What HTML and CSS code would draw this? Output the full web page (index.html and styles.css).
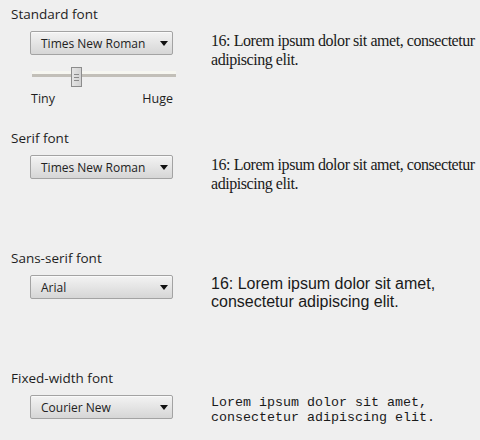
FILE: index.html
```html
<!DOCTYPE html>
<html>
<head>
<meta charset="utf-8">
<link rel="stylesheet" href="styles.css">
</head>
<body>
<div class="page">
  <section class="section section-first">
    <div class="label">Standard font</div>
    <div class="row">
      <div class="controls">
        <div class="select"><span>Times New Roman</span><span class="arrow"></span></div>
        <div class="slider"><div class="track"></div><div class="thumb"><i></i><i></i><i></i></div></div>
        <div class="scale"><span>Tiny</span><span>Huge</span></div>
      </div>
      <div class="preview serif">16: Lorem ipsum dolor sit amet, consectetur adipiscing elit.</div>
    </div>
  </section>
  <section class="section">
    <div class="label">Serif font</div>
    <div class="row">
      <div class="controls">
        <div class="select"><span>Times New Roman</span><span class="arrow"></span></div>
      </div>
      <div class="preview serif">16: Lorem ipsum dolor sit amet, consectetur adipiscing elit.</div>
    </div>
  </section>
  <section class="section">
    <div class="label">Sans-serif font</div>
    <div class="row">
      <div class="controls">
        <div class="select"><span>Arial</span><span class="arrow"></span></div>
      </div>
      <div class="preview sans">16: Lorem ipsum dolor sit amet, consectetur adipiscing elit.</div>
    </div>
  </section>
  <section class="section section-last">
    <div class="label">Fixed-width font</div>
    <div class="row">
      <div class="controls">
        <div class="select"><span>Courier New</span><span class="arrow"></span></div>
      </div>
      <div class="preview mono">Lorem ipsum dolor sit amet, consectetur adipiscing elit.</div>
    </div>
  </section>
</div>
</body>
</html>
```
FILE: styles.css
```css
html, body {
  margin: 0;
  padding: 0;
}
body {
  background: #efefef;
  color: #1e1e1e;
  font-family: "Open Sans", "Noto Sans", sans-serif;
  width: 480px;
  height: 440px;
  overflow: hidden;
}
.page {
  padding-top: 4px;
}
.section {
  min-height: 120px;
  padding-left: 11px;
}
.section-first {
  min-height: 124px;
}
.section-last {
  min-height: 0;
}
.label {
  font-size: 13.5px;
  line-height: 20px;
}
.row {
  display: flex;
  align-items: flex-start;
  margin-top: 7px;
}
.controls {
  flex: 0 0 200px;
  padding-left: 19px;
  box-sizing: border-box;
}
.select {
  width: 143px;
  height: 24px;
  box-sizing: border-box;
  border: 1px solid #a3a3a3;
  border-radius: 2px;
  background: linear-gradient(#f3f3f3 0%, #e6e6e6 45%, #d6d6d6 100%);
  box-shadow: inset 0 1px 0 #fafafa;
  display: flex;
  align-items: center;
  justify-content: space-between;
  padding: 0 4px 0 10px;
  font-size: 12px;
  color: #222;
}
.arrow {
  width: 0;
  height: 0;
  border-left: 4px solid transparent;
  border-right: 4px solid transparent;
  border-top: 5px solid #111;
}
.slider {
  position: relative;
  height: 20px;
  margin: 12px 0 0 2px;
  width: 144px;
}
.track {
  position: absolute;
  left: 0;
  right: 0;
  top: 7px;
  height: 3px;
  background: #c2bfb8;
  box-shadow: 0 -3px 0 #f6f6f0;
}
.thumb {
  position: absolute;
  left: 39px;
  top: 0;
  width: 11px;
  height: 20px;
  box-sizing: border-box;
  border: 1px solid #8c8c8c;
  background: linear-gradient(90deg, #e4e4e4, #d2d2d2);
  display: flex;
  flex-direction: column;
  align-items: center;
  justify-content: center;
  gap: 2px;
}
.thumb i {
  display: block;
  width: 5px;
  height: 1px;
  background: #8a8a8a;
}
.scale {
  display: flex;
  justify-content: space-between;
  width: 142px;
  margin: 4px 0 0 1px;
  font-size: 12.5px;
  line-height: 16px;
}
.preview {
  flex: 1;
  color: #1a1a1a;
}
.serif {
  font-family: "Liberation Serif", "Times New Roman", serif;
  font-size: 16px;
  line-height: 19px;
  letter-spacing: -0.45px;
}
.sans {
  font-family: "Liberation Sans", Arial, sans-serif;
  font-size: 16px;
  line-height: 18px;
}
.mono {
  font-family: "Liberation Mono", "Courier New", monospace;
  font-size: 13.33px;
  line-height: 15px;
}
```
